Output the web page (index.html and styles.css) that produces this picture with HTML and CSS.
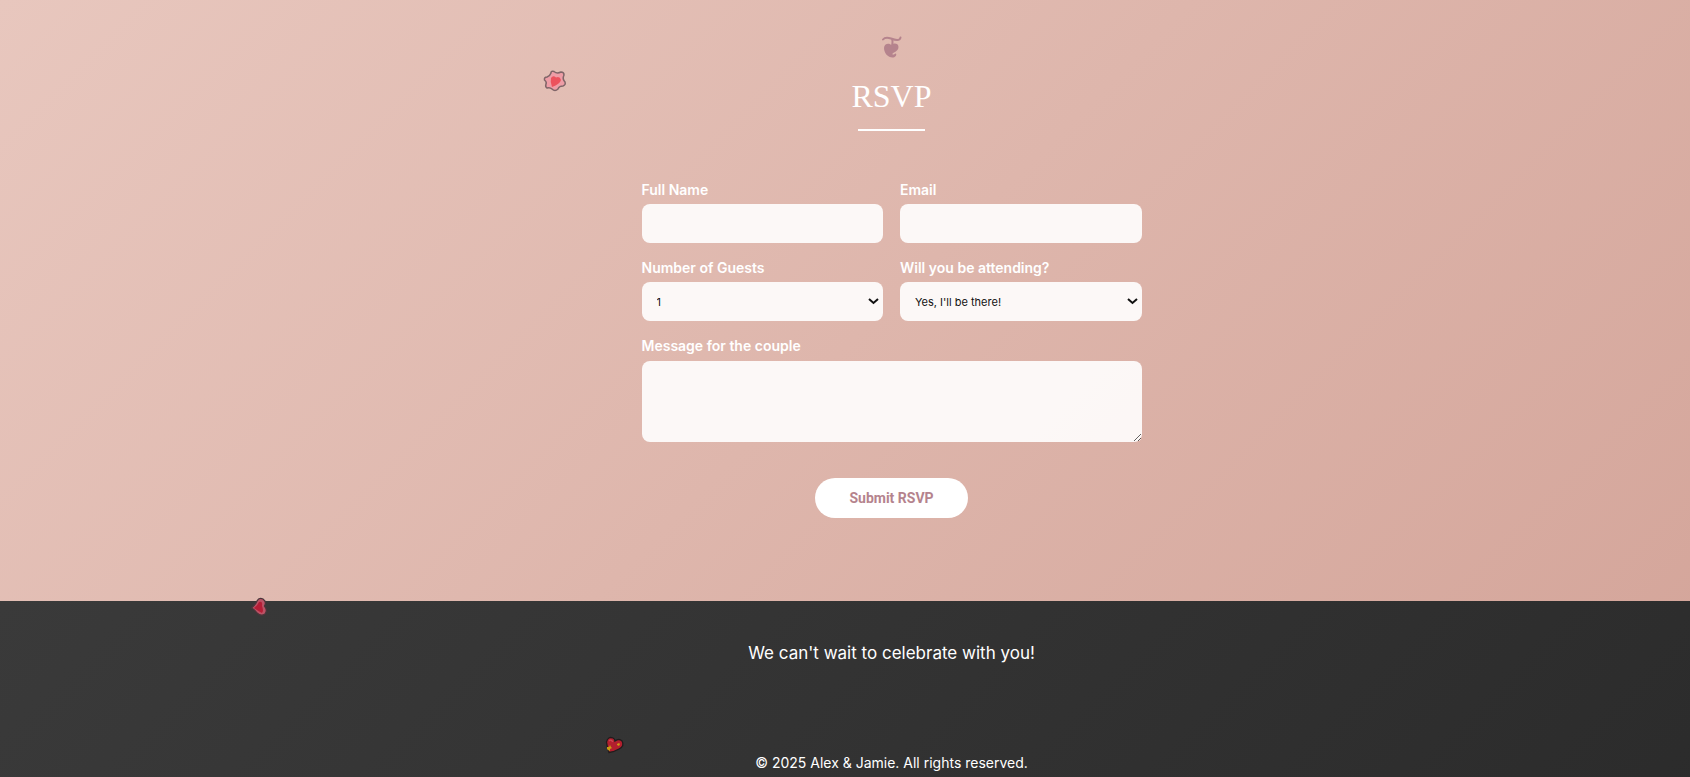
FILE: index.html
```html
<!DOCTYPE html>
<html lang="en">
<head>
<meta charset="utf-8">
<title>RSVP</title>
<link rel="stylesheet" href="styles.css">
</head>
<body>
<main class="rsvp">
  <header class="heading">
    <svg class="ornament" viewBox="0 0 20 22" aria-hidden="true">
      <path class="stem" d="M1 3.500C3 1 6 1.500 9 2.500C13 4 18 5.500 18.500 1.500M10 3C11 5 10.500 7 10 10"/>
      <path class="leaf" d="M9.500 9.500C8 6.500 2 7 2 12C2 17 6 21.500 10.500 21.500C13 21.500 15 19.500 14 17.500C13 17 12.500 19 10.500 18.500C9.500 16.500 16.500 16 16.500 11C16.500 7 11 6.500 9.500 9.500Z"/>
    </svg>
    <h1 class="title">RSVP</h1>
  </header>
  <form class="form">
    <div class="field">
      <label for="name">Full Name</label>
      <input class="control" id="name" type="text">
    </div>
    <div class="field">
      <label for="email">Email</label>
      <input class="control" id="email" type="email">
    </div>
    <div class="field">
      <label for="guests">Number of Guests</label>
      <select class="control" id="guests"><option>1</option><option>2</option><option>3</option></select>
      <svg class="chevron" viewBox="0 0 11 7" aria-hidden="true"><path d="M1 1l4.500 4 4.500-4"/></svg>
    </div>
    <div class="field">
      <label for="attending">Will you be attending?</label>
      <select class="control" id="attending"><option>Yes, I'll be there!</option><option>Sorry, can't make it</option></select>
      <svg class="chevron" viewBox="0 0 11 7" aria-hidden="true"><path d="M1 1l4.500 4 4.500-4"/></svg>
    </div>
    <div class="field field-wide">
      <label for="message">Message for the couple</label>
      <textarea class="control message" id="message"></textarea>
    </div>
    <button class="submit" type="submit">Submit RSVP</button>
  </form>
</main>
<footer class="footer">
  <p class="farewell">We can't wait to celebrate with you!</p>
  <p class="copyright">© 2025 Alex &amp; Jamie. All rights reserved.</p>
</footer>
<svg class="petal petal-one" viewBox="0 0 24 24" aria-hidden="true">
  <path d="M8 4Q8 1.500 11 2.500Q14 5 18 3Q21 3 21 6Q19 10 22 13Q23 16 20 17Q16 17 15 20Q12 23 9 20Q7 18 4 19Q2 18 3 15Q4 13 1.500 11Q1 8 4 8Q7 7 8 4Z" fill="#ee9da6" stroke="#806568" stroke-width="1.500"/>
  <path d="M8 9Q10 6 13 8.500Q17 7 18 11Q17 15 9 18Q7 13 8 9Z" fill="#ec525d"/>
</svg>
<svg class="petal petal-two" viewBox="0 0 20 20" aria-hidden="true">
  <path d="M1.500 11Q6 7 7 4Q9 0 13 2Q17 5 14.500 9Q18 13 15 17Q11 20 7 16Q5 13 1.500 11Z" fill="#bc5265" stroke="#49353a" stroke-width="1.300"/>
  <path d="M4 11Q8 8 9 5Q13 4 12 9Q14 14 12 16Q8 14 4 11Z" fill="#b51e36"/>
</svg>
<svg class="petal petal-three" viewBox="0 0 20 20" aria-hidden="true">
  <path d="M4 17.500Q2 12 1.500 7Q3 1 8 3Q10 4 10 6Q14 3 17 6Q20 11 14 14Q9 17 4 17.500Z" fill="#b31f2e" stroke="#201c1d" stroke-width="1.300"/>
  <path d="M4 6Q6 4 8 7" fill="none" stroke="#cb4653" stroke-width="1.300"/>
  <path d="M2 12l2 0 1-2 1 2 1 1-2 1 0 2-2-1-1-1zM12 9l2-1 1 1-1 2-2-1z" fill="#c99b13"/>
</svg>
</body>
</html>
```
FILE: styles.css
```css
* { box-sizing: border-box; }
body {
  margin: 0;
  min-height: 100vh;
  position: relative;
  display: flex;
  flex-direction: column;
  overflow-x: hidden;
  color: #fff;
  font-family: Inter, "Liberation Sans", sans-serif;
}
.rsvp {
  padding: 36px 0 83px 93px;
  background: linear-gradient(135deg, #e8c7be, #d4a59a) 0 0 / calc(100% + 93px) 100%;
}
.heading {
  display: flex;
  flex-direction: column;
  align-items: center;
  margin-bottom: 50px;
}
.ornament {
  width: 20px;
  height: 22px;
}
.stem {
  fill: none;
  stroke: #b5838d;
  stroke-width: 2;
  stroke-linecap: round;
}
.leaf { fill: #b5838d; }
.title {
  margin: 0;
  padding-top: 16px;
  font: 400 32px/44px "Liberation Serif", serif;
}
.title::after {
  content: "";
  display: block;
  width: 67px;
  height: 2px;
  margin: 11px auto 0;
  background: #fff;
}
.form {
  display: grid;
  grid-template-columns: 1fr 1fr;
  gap: 16px 17px;
  max-width: 500px;
  margin: 0 auto;
}
.field {
  position: relative;
  display: flex;
  flex-direction: column;
  gap: 5px;
}
.field-wide { grid-column: 1 / -1; gap: 6px; }
.field label { font-size: 14px; line-height: 18px; font-weight: 600; }
.control {
  width: 100%;
  height: 39px;
  padding: 0 15px;
  border: 0;
  border-radius: 8px;
  background: rgba(255, 255, 255, 0.9);
  color: #111;
  font: 400 11px Inter, "Liberation Sans", sans-serif;
  appearance: none;
}
.message { height: 81px; padding: 12px 15px; resize: vertical; }
.chevron {
  position: absolute;
  right: 4px;
  bottom: 16px;
  width: 11px;
  height: 7px;
  fill: none;
  stroke: #111;
  stroke-width: 2;
  pointer-events: none;
}
.submit {
  grid-column: 1 / -1;
  justify-self: center;
  margin-top: 20px;
  height: 40px;
  padding: 0 34px;
  border: 0;
  border-radius: 20px;
  background: #fff;
  color: #b5838d;
  font: 700 14px Roboto, "Liberation Sans", sans-serif;
}
.footer {
  flex: 1;
  padding: 40px 0 3px 93px;
  text-align: center;
  background: linear-gradient(135deg, #3a3a3a, #2b2b2b) 0 0 / calc(100% + 93px) 100%;
}
.footer p { margin: 0; }
.farewell { font-size: 17px; line-height: 24px; }
.footer .copyright { margin-top: 87px; font-size: 14px; line-height: 21px; }
.petal { position: absolute; }
.petal-one { left: 543px; top: 69px; width: 24px; height: 24px; }
.petal-two { left: 250px; top: 597px; width: 20px; height: 20px; }
.petal-three { left: 605px; top: 735px; width: 20px; height: 20px; }
```
